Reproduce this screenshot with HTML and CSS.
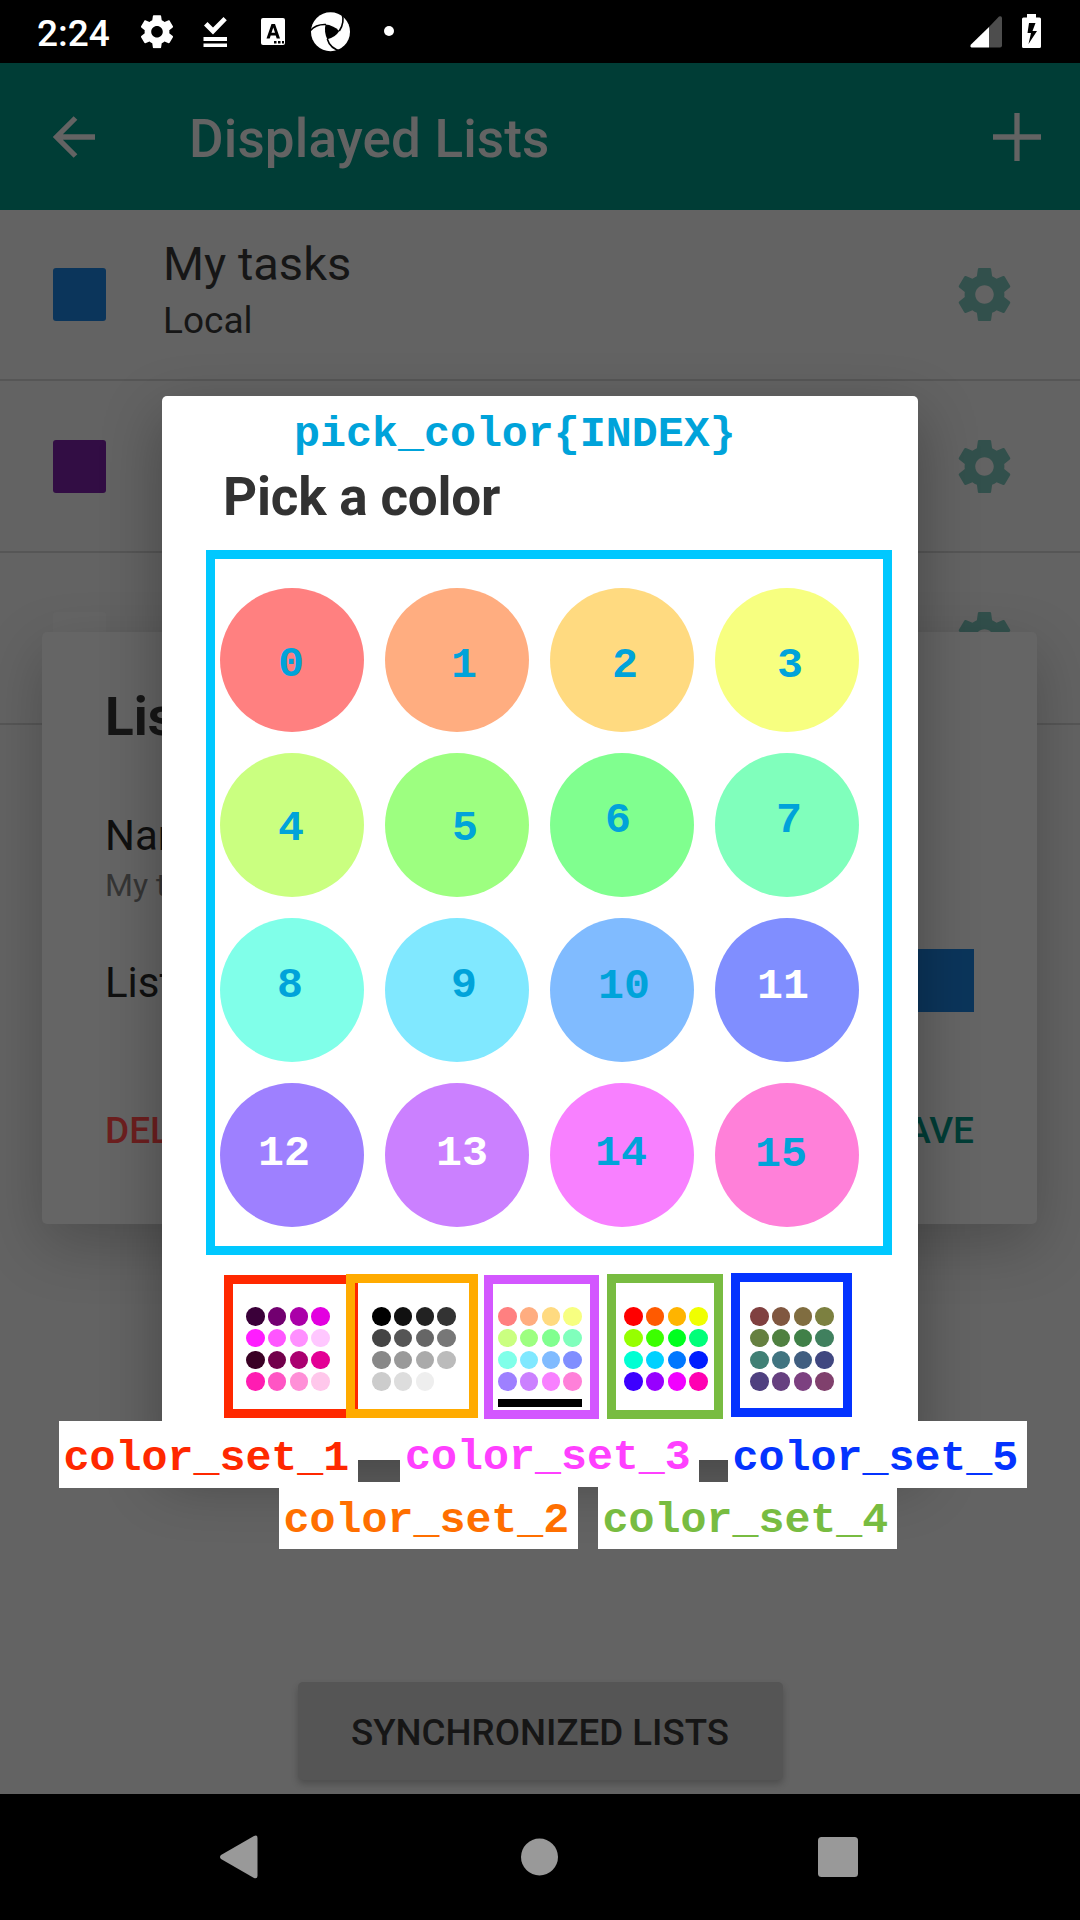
FILE: index.html
```html
<!DOCTYPE html>
<html lang="en">
<head>
<meta charset="utf-8">
<title>Displayed Lists</title>
<link rel="stylesheet" href="styles.css">
</head>
<body>
<svg class="defs" width="0" height="0" aria-hidden="true">
  <symbol id="gear" viewBox="2 2 20 20"><path d="M19.43 12.98c.04-.32.07-.64.07-.98s-.03-.66-.07-.98l2.11-1.65c.19-.15.24-.42.12-.64l-2-3.46c-.12-.22-.39-.3-.61-.22l-2.49 1c-.52-.4-1.08-.73-1.69-.98l-.38-2.65A.488.488 0 0 0 14 2h-4c-.25 0-.46.18-.49.42l-.38 2.65c-.61.25-1.17.59-1.69.98l-2.49-1c-.23-.09-.49 0-.61.22l-2 3.46c-.13.22-.07.49.12.64l2.11 1.65c-.04.32-.07.65-.07.98s.03.66.07.98l-2.11 1.65c-.19.15-.24.42-.12.64l2 3.46c.12.22.39.3.61.22l2.49-1c.52.4 1.08.73 1.69.98l.38 2.65c.03.24.24.42.49.42h4c.25 0 .46-.18.49-.42l.38-2.65c.61-.25 1.17-.59 1.69-.98l2.49 1c.23.09.49 0 .61-.22l2-3.46c.12-.22.07-.49-.12-.64l-2.11-1.65zM12 15.5c-1.93 0-3.5-1.57-3.5-3.5s1.57-3.5 3.5-3.5 3.5 1.57 3.5 3.5-1.57 3.5-3.5 3.5z"/></symbol>
</svg>
<div class="screen">
  <header class="status">
    <span class="clock">2:24</span>
    <svg class="status-left" viewBox="130 0 280 63" width="280" height="63">
      <g fill="#fff">
        <use href="#gear" x="140.5" y="15" width="33" height="33.5"/>
        <path d="M204 25.5l3.5-3.5 5.5 5.500 10.500-10.500 3.300 3.300-13.800 14.200zM203.500 37h23.500v4h-23.500zM203.500 43.500h23.500v3.500h-23.500z"/>
        <rect x="261" y="18" width="24" height="27" rx="2"/>
        <circle cx="330.500" cy="31.700" r="19.500"/>
        <circle cx="389" cy="31" r="5"/>
      </g>
      <path d="M266.500 38.500L271.500 24h3.500l5 14.500h-3.300l-1-3h-5l-1 3zM271.500 32.800h3.500l-1.700-5.300z" fill="#000"/>
      <path d="M274 41h2.500v2.500h-2.500zM278 41h2.500v2.500h-2.500zM282 41h2v2.500h-2z" fill="#000"/>
      <path d="M325.500 24.500q7.500.5 13.800 6.500-4 6.500-12 8.300-3.500-7.300-1.800-14.800z" fill="#000"/>
      <path d="M310.500 30.500q5.500-6.500 15.500-6M342 13.500q3 9-2.700 17.500M342 51.500q-12-2.500-14.700-12.500" fill="none" stroke="#000" stroke-width="1.600"/>
    </svg>
    <svg class="status-right" viewBox="960 0 120 63" width="120" height="63">
      <path d="M989 27v20.500h11q2 0 2-2v-28q-1-2-3-1z" fill="#4d4d4d"/>
      <path d="M989 27v20.500h-17.500q-2-1-.5-3z" fill="#fff"/>
      <path d="M1027 14h9v3.500h3.500q1.500 0 1.500 1.500v27.500q0 1.500-1.500 1.500h-16q-1.500 0-1.500-1.500v-27.500q0-1.500 1.500-1.500h3.500z" fill="#fff"/>
      <path d="M1029 23h6.500l-3 8h4.500l-8.500 13 2.500-11h-3.500z" fill="#000"/>
    </svg>
  </header>
  <div class="appbar">
    <svg width="42" height="42" viewBox="0 0 42 42"><path d="M42 21H4M22.500 2L3.500 21l19 19" fill="none" stroke="#636363" stroke-width="5.300"/></svg>
    <h1>Displayed Lists</h1>
    <svg width="48" height="48" viewBox="0 0 48 48"><path d="M24 0v48M0 24h48" stroke="#636363" stroke-width="5.300"/></svg>
  </div>
  <main>
    <div class="row">
      <i class="swatch blue"></i>
      <div class="names"><b>My tasks</b><span>Local</span></div>
      <svg class="gear" width="53" height="53"><use href="#gear" width="53" height="53"/></svg>
    </div>
    <div class="row">
      <i class="swatch purple"></i>
      <div class="names"></div>
      <svg class="gear" width="53" height="53"><use href="#gear" width="53" height="53"/></svg>
    </div>
    <div class="row">
      <i class="swatch blank"></i>
      <div class="names"></div>
      <svg class="gear" width="53" height="53"><use href="#gear" width="53" height="53"/></svg>
    </div>
    <button class="sync">SYNCHRONIZED LISTS</button>
  </main>
  <nav>
    <svg width="38" height="44" viewBox="0 0 38 44"><path d="M1 20L34 1q3.500-1.500 3.500 2v38q0 3-3.500 2L1 24q-2-2 0-4z" fill="#999"/></svg>
    <svg width="40" height="38" viewBox="0 0 40 38"><circle cx="21.500" cy="19" r="18.500" fill="#999"/></svg>
    <svg width="40" height="40" viewBox="0 0 40 40"><rect width="40" height="40" rx="3.500" fill="#999"/></svg>
  </nav>

  <section class="settings">
    <h2>Lis</h2>
    <div class="field">Nar</div>
    <div class="value">My t</div>
    <div class="color-field"><span>List</span><i></i></div>
    <div class="actions"><span class="delete">DEL</span><span class="save">SAVE</span></div>
  </section>

  <section class="picker">
    <p class="note">pick_color{INDEX}</p>
    <h2>Pick a color</h2>
    <div class="palette hues pastel">
      <i class="s1"><span>0</span></i><i class="s2"><span>1</span></i><i class="s3"><span>2</span></i><i class="s4"><span>3</span></i>
      <i class="s5"><span>4</span></i><i class="s6"><span>5</span></i><i class="s7"><span>6</span></i><i class="s8"><span>7</span></i>
      <i class="s9"><span>8</span></i><i class="s10"><span>9</span></i><i class="s11"><span>10</span></i><i class="s12"><span>11</span></i>
      <i class="s13"><span>12</span></i><i class="s14"><span>13</span></i><i class="s15"><span>14</span></i><i class="s16"><span>15</span></i>
    </div>
    <div class="sets">
      <div class="set"><div class="dots magenta"><i></i><i></i><i></i><i></i><i></i><i></i><i></i><i></i><i></i><i></i><i></i><i></i><i></i><i></i><i></i><i></i></div><div class="frame f1"></div></div>
      <div class="set"><div class="dots gray"><i></i><i></i><i></i><i></i><i></i><i></i><i></i><i></i><i></i><i></i><i></i><i></i><i></i><i></i><i></i><i></i></div><div class="frame f2"></div></div>
      <div class="set selected"><div class="dots hues pastel"><i></i><i></i><i></i><i></i><i></i><i></i><i></i><i></i><i></i><i></i><i></i><i></i><i></i><i></i><i></i><i></i></div><div class="frame f3"></div></div>
      <div class="set"><div class="dots hues vivid"><i></i><i></i><i></i><i></i><i></i><i></i><i></i><i></i><i></i><i></i><i></i><i></i><i></i><i></i><i></i><i></i></div><div class="frame f4"></div></div>
      <div class="set"><div class="dots hues muted"><i></i><i></i><i></i><i></i><i></i><i></i><i></i><i></i><i></i><i></i><i></i><i></i><i></i><i></i><i></i><i></i></div><div class="frame f5"></div></div>
    </div>
  </section>

  <span class="label l1">color_set_1</span>
  <span class="label l2">color_set_2</span>
  <span class="label l3">color_set_3</span>
  <span class="label l4">color_set_4</span>
  <span class="label l5">color_set_5</span>
</div>
</body>
</html>
```
FILE: styles.css
```css
* { box-sizing: border-box; margin: 0; padding: 0; }
body { font-family: Roboto, sans-serif; background: #636363; }
i { font-style: normal; display: block; }
svg { display: block; flex: none; }
.defs { position: absolute; }
.screen { position: relative; width: 1080px; height: 1920px; display: flex; flex-direction: column; overflow: hidden; background: #636363; }

/* system bars */
.status { height: 63px; background: #000; display: flex; align-items: center; }
.clock { width: 130px; padding-left: 37px; font-size: 37px; line-height: 61px; font-weight: 500; color: #fff; padding-top: 4px; white-space: nowrap; }
.status-right { margin-left: auto; }
nav { height: 126px; background: #000; display: flex; justify-content: space-between; align-items: center; padding: 0 222px 0 220px; }

.appbar { height: 147px; background: #003d36; display: flex; align-items: center; padding: 0 39px 0 53px; }
.appbar h1 { flex: 1; font-size: 53px; font-weight: 500; line-height: 62px; letter-spacing: .15px; color: #636363; padding: 4px 0 0 94px; }

/* list of task lists */
main { flex: 1; display: flex; flex-direction: column; margin-top: -1px; }
.row { height: 172px; border-bottom: 2px solid #565656; display: flex; align-items: center; padding: 0 71px 0 53px; }
.swatch { width: 53px; height: 53px; border-radius: 3px; }
.blue { background: #0b355b; }
.purple { background: #320d44; }
.blank { background: #656565; }
.names { flex: 1; padding-left: 57px; display: flex; flex-direction: column; color: #161616; }
.names b { font-weight: 400; font-size: 47px; line-height: 56px; }
.names span { font-size: 37px; line-height: 50px; margin-bottom: 6px; margin-top: 4px; }
.gear { fill: #32504c; margin-right: -2px; }
.sync { margin: auto auto 14px; width: 485px; height: 98px; border: 0; border-radius: 5px; background: #555; color: #161616; font: 500 36.700px/98px Roboto, sans-serif; padding-top: 2px; box-shadow: 0 4px 7px rgba(0,0,0,.22); }

/* list settings dialog */
.settings { position: absolute; left: 42px; top: 632px; width: 995px; height: 592px; border-radius: 5px; background: #656565; padding: 54px 63px 0 63px; color: #101010; box-shadow: 0 20px 60px rgba(0,0,0,.22); }
.settings h2 { font-size: 53px; line-height: 62px; font-weight: 700; color: #161616; }
.field { font-size: 42px; line-height: 50px; margin-top: 63px; }
.value { font-size: 32px; line-height: 38px; margin-top: 5px; color: #353535; }
.color-field { display: flex; justify-content: space-between; align-items: center; height: 63px; margin-top: 45px; font-size: 42px; }
.color-field span { padding-top: 4px; }
.color-field i { width: 160px; height: 63px; background: #0b355b; }
.actions { display: flex; justify-content: space-between; font-size: 37px; font-weight: 500; line-height: 44px; margin-top: 97px; }
.delete { color: #6d1f1f; }
.save { color: #003d36; }

/* color picker dialog */
.picker { position: absolute; left: 162px; top: 396px; width: 756px; height: 1064px; border-radius: 5px; background: #fff; padding-left: 44px; box-shadow: 0 20px 60px rgba(0,0,0,.3); }
.note, .palette span, .label { font: 700 43.300px/48px "Liberation Mono", "Courier New", monospace; }
.note { padding: 15px 0 0 88px; color: #00a3da; white-space: pre; }
.picker h2 { font-size: 53px; line-height: 62px; font-weight: 700; letter-spacing: -.2px; color: #323232; margin: 7px 0 22px 17px; }
.palette { width: 685.500px; height: 705px; border: 9px solid #00c8ff; padding: 29px 0 0 5px; display: grid; grid-template-columns: repeat(4, 144px); grid-auto-rows: 144px; gap: 21px; }
.palette i { border-radius: 50%; display: grid; place-items: center; }
.palette span { color: #00a3da; transform: translate(var(--dx, 0), var(--dy, 3px)); }
.s1 { --dx: -1px; --dy: 5px; }
.s2 { --dx: 7px; --dy: 6px; }
.s3 { --dx: 3px; --dy: 6px; }
.s4 { --dx: 3px; --dy: 6px; }
.s5 { --dx: -1px; --dy: 4px; }
.s6 { --dx: 8px; --dy: 4px; }
.s7 { --dx: -4px; --dy: -4px; }
.s8 { --dx: 2px; --dy: -4px; }
.s9 { --dx: -2px; --dy: -4px; }
.s10 { --dx: 7px; --dy: -4px; }
.s11 { --dx: 2px; --dy: -3px; }
.s12 { --dx: -4px; --dy: -3px; }
.s13 { --dx: -8px; --dy: -1px; }
.s14 { --dx: 5px; --dy: -1px; }
.s15 { --dx: -1px; --dy: -1px; }
.s16 { --dx: -6px; --dy: 0px; }
.palette .s12 span, .palette .s13 span, .palette .s14 span { color: #fff; }

.sets { display: flex; gap: 42px; padding: 52px 0 0 40px; }
.set { position: relative; width: 84px; height: 100px; }
.selected { border-bottom: 8px solid #000; }
.dots { display: grid; grid-template-columns: repeat(4, 18.600px); grid-auto-rows: 18.600px; gap: 3.200px; }
.dots i { border-radius: 50%; }
.frame { position: absolute; border: 9px solid; }
.f1 { left: -22px; top: -32px; width: 134px; height: 143px; border-color: #ff2800; }
.f2 { left: -26px; top: -33px; width: 132px; height: 144px; border-color: #ffab00; }
.f3 { left: -14px; top: -32px; width: 115px; height: 144px; border-color: #d357ff; }
.f4 { left: -17px; top: -33px; width: 116px; height: 145px; border-color: #78bc41; }
.f5 { left: -19px; top: -34px; width: 121px; height: 144px; border-color: #0433ff; }

.hues :nth-child(1) { --h: 0; }
.hues :nth-child(2) { --h: 21.2; }
.hues :nth-child(3) { --h: 42.4; }
.hues :nth-child(4) { --h: 63.6; }
.hues :nth-child(5) { --h: 84.8; }
.hues :nth-child(6) { --h: 106; }
.hues :nth-child(7) { --h: 127.2; }
.hues :nth-child(8) { --h: 148.4; }
.hues :nth-child(9) { --h: 169.6; }
.hues :nth-child(10) { --h: 190.8; }
.hues :nth-child(11) { --h: 212; }
.hues :nth-child(12) { --h: 233.2; }
.hues :nth-child(13) { --h: 254.4; }
.hues :nth-child(14) { --h: 275.6; }
.hues :nth-child(15) { --h: 296.8; }
.hues :nth-child(16) { --h: 318; }
.pastel > i { background: hsl(var(--h) 100% 75%); }
.vivid > i { background: hsl(var(--h) 100% 50%); }
.muted > i { background: hsl(var(--h) 33.3% 37.6%); }

.magenta :nth-child(1) { background: #3a0039; }
.magenta :nth-child(2) { background: #720070; }
.magenta :nth-child(3) { background: #aa00a8; }
.magenta :nth-child(4) { background: #e300e0; }
.magenta :nth-child(5) { background: #ff1cff; }
.magenta :nth-child(6) { background: #ff55ff; }
.magenta :nth-child(7) { background: #ff8fff; }
.magenta :nth-child(8) { background: #ffc7ff; }
.magenta :nth-child(9) { background: #3a0025; }
.magenta :nth-child(10) { background: #72004b; }
.magenta :nth-child(11) { background: #aa0070; }
.magenta :nth-child(12) { background: #e30095; }
.magenta :nth-child(13) { background: #ff1cb2; }
.magenta :nth-child(14) { background: #ff55c4; }
.magenta :nth-child(15) { background: #ff8fd7; }
.magenta :nth-child(16) { background: #ffc7eb; }
.gray :nth-child(1) { background: #000; }
.gray :nth-child(2) { background: #111; }
.gray :nth-child(3) { background: #222; }
.gray :nth-child(4) { background: #333; }
.gray :nth-child(5) { background: #444; }
.gray :nth-child(6) { background: #555; }
.gray :nth-child(7) { background: #666; }
.gray :nth-child(8) { background: #777; }
.gray :nth-child(9) { background: #888; }
.gray :nth-child(10) { background: #999; }
.gray :nth-child(11) { background: #aaa; }
.gray :nth-child(12) { background: #bbb; }
.gray :nth-child(13) { background: #ccc; }
.gray :nth-child(14) { background: #ddd; }
.gray :nth-child(15) { background: #eee; }
.gray :nth-child(16) { background: #fff; }

/* annotation labels pinned over the screen */
.label { position: absolute; width: 299px; height: 67px; padding: 14px 0 0 5px; background: #fff; white-space: nowrap; }
.l1 { left: 58.500px; top: 1421px; color: #ff2800; }
.l2 { left: 278.500px; top: 1482px; padding-top: 15px; color: #ff6f00; }
.l3 { left: 400px; top: 1420px; color: #ff40ff; }
.l4 { left: 597.500px; top: 1482px; padding-top: 15px; color: #78bc41; }
.l5 { left: 727.500px; top: 1421px; color: #0433ff; }
```
